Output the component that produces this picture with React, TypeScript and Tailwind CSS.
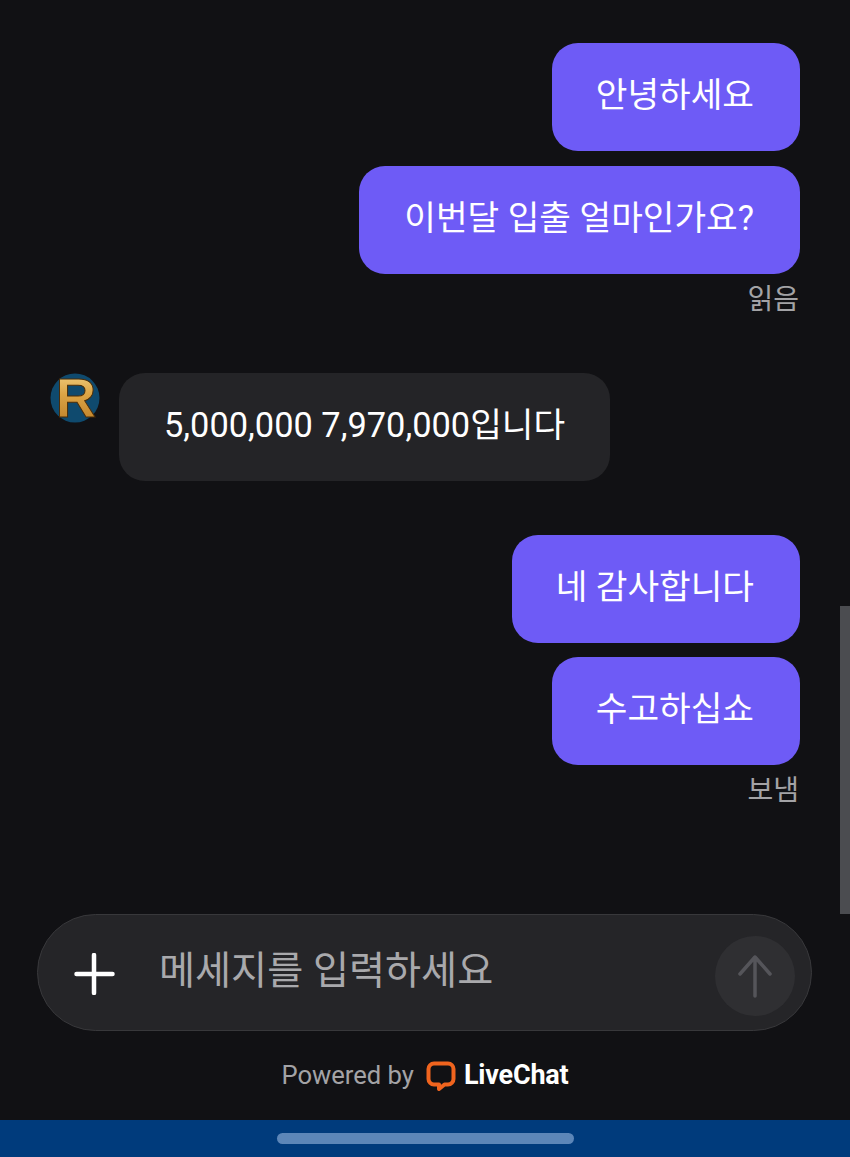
const font = { fontFamily: '"Roboto", "Noto Sans CJK KR", sans-serif' };

function Mine({ text, width }: { text: string; width: string }) {
    return (
        <div className={`h-[108px] ${width} rounded-[26px] bg-[#6e5bf6] text-white text-[34.4px] flex items-center justify-end pr-[46px] pb-[3px]`}>
            {text}
        </div>
    );
}

function Avatar() {
    return (
        <svg width="50" height="50" viewBox="0 0 50 50" className="shrink-0 overflow-visible">
            <defs>
                <linearGradient id="gold" x1="0" y1="0" x2="0" y2="1">
                    <stop offset="0" stopColor="#f6d98e" />
                    <stop offset="0.45" stopColor="#dba445" />
                    <stop offset="1" stopColor="#b87a24" />
                </linearGradient>
            </defs>
            <circle cx="25" cy="25" r="24.5" fill="#0f4a6e" />
            <text x="26" y="44" textAnchor="middle" fontFamily="Liberation Sans" fontWeight="700" fontSize="56" fill="url(#gold)" stroke="#4a2c08" strokeWidth="1">
                R
            </text>
        </svg>
    );
}

export default function App() {
    return (
        <div style={font} className="relative w-[850px] h-[1157px] overflow-hidden bg-[#111114] flex flex-col">
            {/* scrollbar */}
            <div className="absolute right-0 top-[606px] w-[10px] h-[308px] bg-[#4b4c50]" />

            <main className="flex-1 flex flex-col pt-[43px] px-[50px]">
                <div className="flex flex-col items-end gap-[15px]">
                    <Mine text="안녕하세요" width="w-[248px]" />
                    <Mine text="이번달 입출 얼마인가요?" width="w-[441px]" />
                </div>
                <div className="self-end text-[28px] leading-[32px] text-[#a3a3a6] mt-[10px] mr-[1px]">읽음</div>

                <div className="flex gap-[19px] mt-[57px]">
                    <Avatar />
                    <div className="w-[491px] h-[108px] rounded-[26px] bg-[#242427] text-white text-[34.4px] flex items-center pl-[45px] pb-[3px]">
                        5,000,000 7,970,000입니다
                    </div>
                </div>

                <div className="flex flex-col items-end gap-[14px] mt-[54px]">
                    <Mine text="네 감사합니다" width="w-[288px]" />
                    <Mine text="수고하십쇼" width="w-[248px]" />
                </div>
                <div className="self-end text-[28px] leading-[32px] text-[#a3a3a6] mt-[10px] mr-[1px]">보냄</div>
            </main>

            <div className="mx-[37px] w-[775px] h-[117px] rounded-full bg-[#252528] border border-[#38383b] flex items-center pl-[36px] pr-[16px]">
                <svg width="42" height="42" viewBox="0 0 42 42" className="shrink-0 mt-[2px]">
                    <path d="M20 2v38M2.5 21h36" stroke="#fff" strokeWidth="4.5" strokeLinecap="round" fill="none" />
                </svg>
                <div className="ml-[43px] text-[39.2px] text-[#a9a9ac] pb-[2px]">메세지를 입력하세요</div>
                <div className="ml-auto w-[80px] h-[80px] rounded-full bg-[#2f2f32] flex items-center justify-center mt-[6px]">
                    <svg width="36" height="44" viewBox="0 0 36 44">
                        <path d="M18 42V3M3 20L18 3l15 17" stroke="#55555a" strokeWidth="3.5" strokeLinecap="round" strokeLinejoin="round" fill="none" />
                    </svg>
                </div>
            </div>

            <div className="h-[89px] flex items-center justify-center gap-[12px]">
                <span className="text-[25.6px] text-[#a3a3a6]">Powered by</span>
                <span className="flex items-center gap-[8px]">
                    <svg width="30" height="30" viewBox="0 0 30 30">
                        <path d="M8 2.5h14a5.5 5.5 0 0 1 5.5 5.5v10a5.5 5.5 0 0 1-5.5 5.5h-3.5L13 28v-4.5H8A5.5 5.5 0 0 1 2.5 18V8A5.5 5.5 0 0 1 8 2.5z" stroke="#f0641e" strokeWidth="4" strokeLinejoin="round" fill="none" />
                    </svg>
                    <span className="text-[27px] font-bold text-white tracking-[-0.2px]">LiveChat</span>
                </span>
            </div>

            <div className="h-[37px] bg-[#003b7c] flex items-center justify-center">
                <div className="w-[297px] h-[11px] rounded-full bg-[#5c86b8]" />
            </div>
        </div>
    );
}
